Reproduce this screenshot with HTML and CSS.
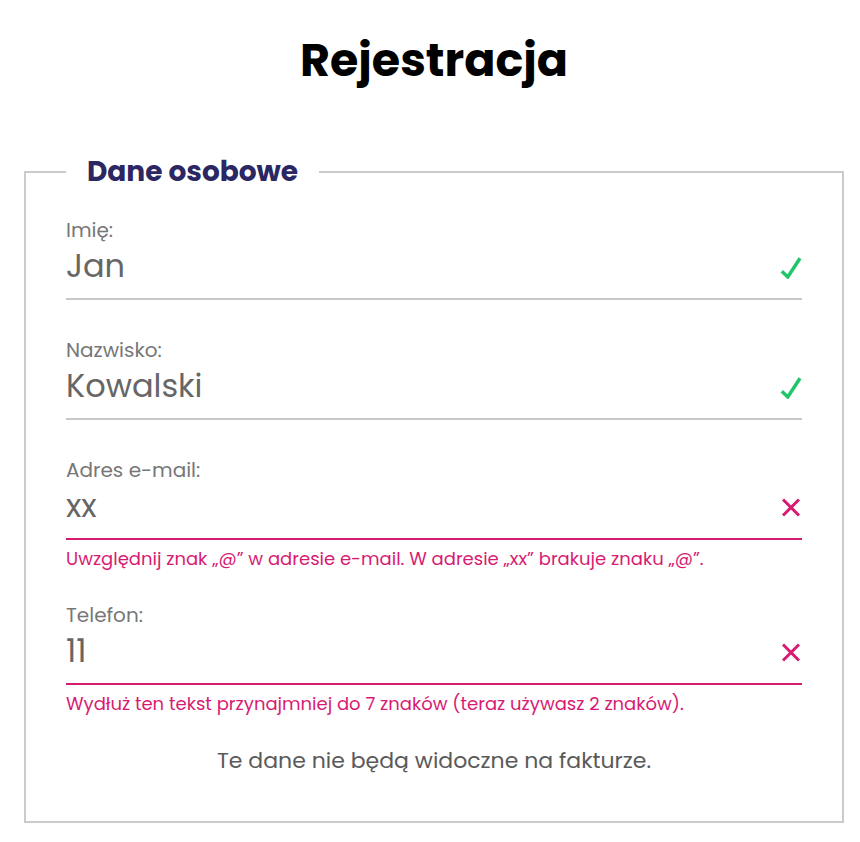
FILE: index.html
```html
<!DOCTYPE html>
<html lang="pl">
<head>
    <meta charset="UTF-8">
    <title>Rejestracja</title>
    <link rel="stylesheet" href="styles.css">
</head>
<body>
<div class="page">
    <h1 class="title">Rejestracja</h1>
    <form class="form" novalidate>
        <fieldset class="group">
            <legend class="group-title">Dane osobowe</legend>

            <div class="field valid">
                <label class="field-label" for="name">Imię:</label>
                <div class="field-row">
                    <input class="field-input" id="name" type="text" value="Jan">
                    <svg class="field-icon" viewBox="0 0 22 22"><path d="M1.8 14.2 L7.8 20 L20 1.2"/></svg>
                </div>
            </div>

            <div class="field valid">
                <label class="field-label" for="surname">Nazwisko:</label>
                <div class="field-row">
                    <input class="field-input" id="surname" type="text" value="Kowalski">
                    <svg class="field-icon" viewBox="0 0 22 22"><path d="M1.8 14.2 L7.8 20 L20 1.2"/></svg>
                </div>
            </div>

            <div class="field invalid">
                <label class="field-label" for="email">Adres e-mail:</label>
                <div class="field-row">
                    <input class="field-input" id="email" type="email" value="xx">
                    <svg class="field-icon" viewBox="0 0 22 22"><path d="M3 2.5 L19 18.5 M19 2.5 L3 18.5"/></svg>
                </div>
                <p class="field-error">Uwzględnij znak „@” w adresie e-mail. W adresie „xx” brakuje znaku „@”.</p>
            </div>

            <div class="field invalid">
                <label class="field-label" for="phone">Telefon:</label>
                <div class="field-row">
                    <input class="field-input" id="phone" type="tel" value="11">
                    <svg class="field-icon" viewBox="0 0 22 22"><path d="M3 2.5 L19 18.5 M19 2.5 L3 18.5"/></svg>
                </div>
                <p class="field-error">Wydłuż ten tekst przynajmniej do 7 znaków (teraz używasz 2 znaków).</p>
            </div>

            <p class="group-note">Te dane nie będą widoczne na fakturze.</p>
        </fieldset>
    </form>
</div>
</body>
</html>
```

FILE: styles.css
```css
body {
    margin: 0;
    background: #fff;
    font-family: Poppins, "Open Sans", "DejaVu Sans", sans-serif;
    color: #555;
}
.page {
    padding: 0 16px 0 24px;
}
.title {
    margin: 0;
    padding-top: 28px;
    height: 72px;
    text-align: center;
    font-size: 46px;
    font-weight: 700;
    line-height: 64px;
    color: #000;
}
/* 分组 */
.group {
    margin: 52px 0 0;
    padding: 0 40px 45px;
    border: 2px solid #cbcbcb;
}
.group-title {
    padding: 0 21px;
    font-size: 28px;
    font-weight: 700;
    line-height: 40px;
    color: #2b2763;
}
/* 字段 */
.field {
    padding-top: 36px;
}
.field:first-of-type {
    padding-top: 24px;
}
.invalid + .field {
    padding-top: 30px;
}
.field-label {
    display: block;
    font-size: 20px;
    line-height: 28px;
    color: #777;
}
.field-row {
    display: flex;
    align-items: center;
    padding-bottom: 10px;
    border-bottom: 2px solid #c8c8c8;
}
.field-input {
    flex: 1;
    min-width: 0;
    height: 44px;
    border: none;
    outline: none;
    padding: 0;
    background: transparent;
    font-family: inherit;
    font-size: 32px;
    color: #666;
}
.field-icon {
    width: 22px;
    height: 22px;
    margin-top: 4px;
    fill: none;
    stroke-width: 3.4;
}
.valid .field-icon {
    stroke: #1fc56a;
}
.invalid .field-icon {
    stroke: #d81b72;
    stroke-width: 3;
}
.invalid .field-row {
    border-bottom-color: #d81b72;
}
.field-error {
    margin: 7px 0 0;
    font-size: 18px;
    line-height: 24px;
    color: #d81b72;
}
.group-note {
    margin: 30px 0 0;
    text-align: center;
    font-size: 22px;
    line-height: 30px;
    color: #5a5a5a;
}
```
